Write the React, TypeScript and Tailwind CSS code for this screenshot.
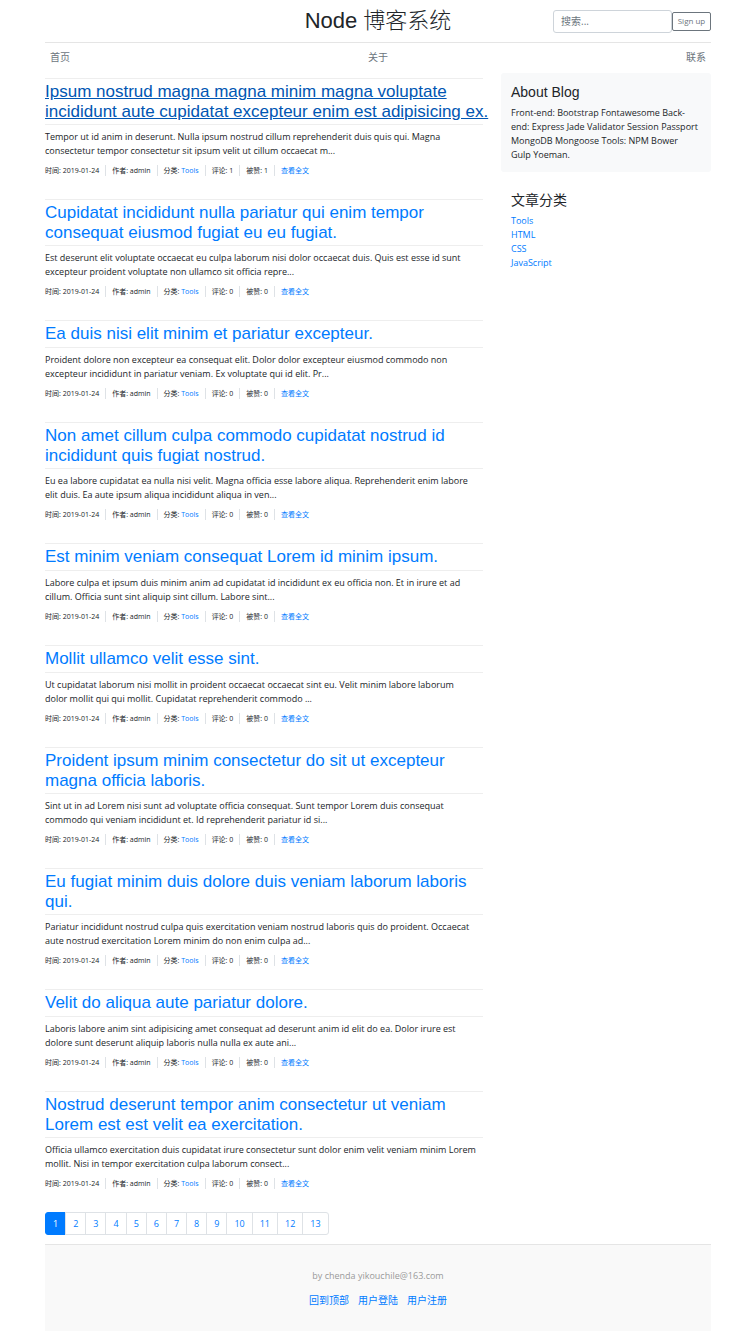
const body = "font-['Open_Sans','Noto_Sans_CJK_SC',sans-serif]";
const heading = "font-['Liberation_Sans','Noto_Sans_CJK_SC',sans-serif]";

type Post = { title: string; excerpt: string; count: number; hovered?: boolean };

const posts: Post[] = [
  {
    title: 'Ipsum nostrud magna magna minim magna voluptate\nincididunt aute cupidatat excepteur enim est adipisicing ex.',
    excerpt:
      'Tempor ut id anim in deserunt. Nulla ipsum nostrud cillum reprehenderit duis quis qui. Magna\nconsectetur tempor consectetur sit ipsum velit ut cillum occaecat m...',
    count: 1,
    hovered: true,
  },
  {
    title: 'Cupidatat incididunt nulla pariatur qui enim tempor\nconsequat eiusmod fugiat eu eu fugiat.',
    excerpt:
      'Est deserunt elit voluptate occaecat eu culpa laborum nisi dolor occaecat duis. Quis est esse id sunt\nexcepteur proident voluptate non ullamco sit officia repre...',
    count: 0,
  },
  {
    title: 'Ea duis nisi elit minim et pariatur excepteur.',
    excerpt:
      'Proident dolore non excepteur ea consequat elit. Dolor dolor excepteur eiusmod commodo non\nexcepteur incididunt in pariatur veniam. Ex voluptate qui id elit. Pr...',
    count: 0,
  },
  {
    title: 'Non amet cillum culpa commodo cupidatat nostrud id\nincididunt quis fugiat nostrud.',
    excerpt:
      'Eu ea labore cupidatat ea nulla nisi velit. Magna officia esse labore aliqua. Reprehenderit enim labore\nelit duis. Ea aute ipsum aliqua incididunt aliqua in ven...',
    count: 0,
  },
  {
    title: 'Est minim veniam consequat Lorem id minim ipsum.',
    excerpt:
      'Labore culpa et ipsum duis minim anim ad cupidatat id incididunt ex eu officia non. Et in irure et ad\ncillum. Officia sunt sint aliquip sint cillum. Labore sint...',
    count: 0,
  },
  {
    title: 'Mollit ullamco velit esse sint.',
    excerpt:
      'Ut cupidatat laborum nisi mollit in proident occaecat occaecat sint eu. Velit minim labore laborum\ndolor mollit qui qui mollit. Cupidatat reprehenderit commodo ...',
    count: 0,
  },
  {
    title: 'Proident ipsum minim consectetur do sit ut excepteur\nmagna officia laboris.',
    excerpt:
      'Sint ut in ad Lorem nisi sunt ad voluptate officia consequat. Sunt tempor Lorem duis consequat\ncommodo qui veniam incididunt et. Id reprehenderit pariatur id si...',
    count: 0,
  },
  {
    title: 'Eu fugiat minim duis dolore duis veniam laborum laboris\nqui.',
    excerpt:
      'Pariatur incididunt nostrud culpa quis exercitation veniam nostrud laboris quis do proident. Occaecat\naute nostrud exercitation Lorem minim do non enim culpa ad...',
    count: 0,
  },
  {
    title: 'Velit do aliqua aute pariatur dolore.',
    excerpt:
      'Laboris labore anim sint adipisicing amet consequat ad deserunt anim id elit do ea. Dolor irure est\ndolore sunt deserunt aliquip laboris nulla nulla ex aute ani...',
    count: 0,
  },
  {
    title: 'Nostrud deserunt tempor anim consectetur ut veniam\nLorem est est velit ea exercitation.',
    excerpt:
      'Officia ullamco exercitation duis cupidatat irure consectetur sunt dolor enim velit veniam minim Lorem\nmollit. Nisi in tempor exercitation culpa laborum consect...',
    count: 0,
  },
];

const categories = ['Tools', 'HTML', 'CSS', 'JavaScript'];
const pages = Array.from({ length: 13 }, (_, i) => i + 1);

function PostItem({ post }: { post: Post }) {
  return (
    <article className="pb-[23px]">
      <h2 className={`${heading} border-y border-[#eeeeee] pt-[3px] pb-[2px] text-[17px] leading-[20px] whitespace-pre`}>
        <a
          href="#"
          className={
            post.hovered
              ? 'block min-h-[21px] text-[#0056b3] underline'
              : 'block min-h-[21px] text-[#007bff]'
          }
        >
          {post.title}
        </a>
      </h2>
      <p className="mt-[5px] text-[9px] leading-[14px] whitespace-pre-line">{post.excerpt}</p>
      <ul className="mt-[6px] flex h-[12px] items-center divide-x divide-[#dee2e6] text-[7px] leading-[11px] whitespace-nowrap">
        <li className="pr-[6px]">时间: 2019-01-24</li>
        <li className="px-[6px]">作者: admin</li>
        <li className="px-[6px]">
          分类:{' '}
          <a href="#" className="text-[#007bff]">
            Tools
          </a>
        </li>
        <li className="px-[6px]">评论: {post.count}</li>
        <li className="px-[6px]">被赞: {post.count}</li>
        <li className="pl-[6px]">
          <a href="#" className="text-[#007bff]">
            查看全文
          </a>
        </li>
      </ul>
    </article>
  );
}

export default function App() {
  return (
    <div className={`${body} bg-white px-[45px] text-[#212529]`}>
      <header className="grid h-[43px] grid-cols-3 items-center border-b border-[#e5e5e5]">
        <h1 className={`${heading} col-start-2 text-center text-[22px] leading-[26px] font-light whitespace-nowrap`}>
          Node 博客系统
        </h1>
        <form className="flex items-center justify-end" onSubmit={(e) => e.preventDefault()}>
          <input
            type="search"
            aria-label="搜索"
            placeholder="搜索..."
            className="h-[23px] w-[119px] rounded-[3px] border border-[#ced4da] px-[7px] text-[10px] leading-[14px] placeholder:text-[#6c757d]"
          />
          <button
            type="button"
            className="h-[19px] w-[39px] rounded-[2px] border border-[#6c757d] text-[8px] leading-[12px] whitespace-nowrap text-[#6c757d]"
          >
            Sign up
          </button>
        </form>
      </header>

      <nav className="flex h-[30px] items-center justify-between px-[5px] pb-[2px] text-[10px] leading-[14px] text-[#6c757d]">
        <a href="#">首页</a>
        <a href="#">关于</a>
        <a href="#">联系</a>
      </nav>

      <div className="grid grid-cols-3 gap-x-[18px]">
        <main className="col-span-2 pt-[5px]">
          {posts.map((post) => (
            <PostItem key={post.title} post={post} />
          ))}
          <ul className="flex pb-[9px] text-[9px] leading-[14px] text-[#007bff]">
            {pages.map((page) => (
              <li key={page} className="group -ml-px first:ml-0">
                <a
                  href="#"
                  className={
                    page === 1
                      ? 'flex h-[23px] items-center rounded-l-[3px] border border-[#007bff] bg-[#007bff] px-[7px] text-white'
                      : 'flex h-[23px] items-center border border-[#dee2e6] px-[7px] group-last:rounded-r-[3px]'
                  }
                >
                  {page}
                </a>
              </li>
            ))}
          </ul>
        </main>

        <aside>
          <section className="rounded-[3px] bg-[#f8f9fa] px-[10px] py-[10px]">
            <h4 className={`${heading} mb-[5px] text-[14px] leading-[18px]`}>About Blog</h4>
            <p className="text-[9px] leading-[14px]">
              Front-end: Bootstrap Fontawesome Back-
              <br />
              end: Express Jade Validator Session Passport
              <br />
              MongoDB Mongoose Tools: NPM Bower
              <br />
              Gulp Yoeman.
            </p>
          </section>
          <section className="px-[10px] pt-[19px]">
            <h4 className={`${heading} mb-[5px] text-[14px] leading-[18px]`}>文章分类</h4>
            <ol className="text-[9px] leading-[14px] text-[#007bff]">
              {categories.map((name) => (
                <li key={name}>
                  <a href="#">{name}</a>
                </li>
              ))}
            </ol>
          </section>
        </aside>
      </div>

      <footer className="border-t border-[#e5e5e5] bg-[#f9f9f9] py-[24px] text-center leading-[14px] text-[#999999]">
        <p className="text-[9px]">by chenda yikouchile@163.com</p>
        <p className="mt-[10px] flex justify-center gap-[9px] text-[10px] text-[#007bff]">
          <a href="#">回到顶部</a>
          <a href="#">用户登陆</a>
          <a href="#">用户注册</a>
        </p>
      </footer>
    </div>
  );
}
